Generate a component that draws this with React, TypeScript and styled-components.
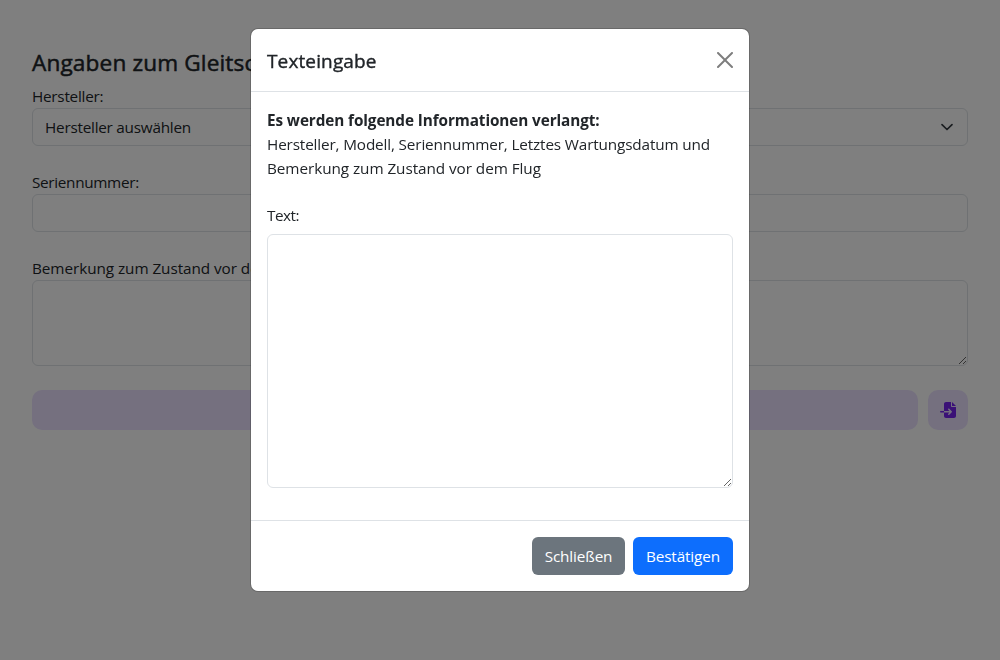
import React from "react";
import styled, { createGlobalStyle } from "styled-components";
import { FaFileImport } from "react-icons/fa6";

const GlobalStyle = createGlobalStyle`
  *, *::before, *::after { box-sizing: border-box; }
  body {
    margin: 0;
    overflow: hidden;
    background: #fff;
    color: #212529;
    font: 400 15.3px/24px "Segoe UI", "Open Sans", "Noto Sans", sans-serif;
  }
`;

const Page = styled.main`
  height: 660px;
  padding: 48px 32px 0;
`;

const PageTitle = styled.h4`
  margin: 0 0 7px;
  font-size: 22.6px;
  line-height: 29px;
  font-weight: 500;
  letter-spacing: 0.15px;
  -webkit-text-stroke: 0.5px currentColor;
  white-space: nowrap;
`;

const Field = styled.div`
  display: flex;
  flex-direction: column;
  margin-bottom: 24px;
`;

const Label = styled.label<{ $spacing?: number }>`
  height: 24px;
  letter-spacing: ${(p) => p.$spacing ?? 0}px;
`;

const Control = styled.div<{ $spacing?: number }>`
  display: flex;
  align-items: center;
  justify-content: space-between;
  height: 38px;
  padding: 0 12px;
  border: 1px solid #dee2e6;
  border-radius: 6px;
  letter-spacing: ${(p) => p.$spacing ?? 0}px;
`;

const TextArea = styled.textarea<{ $height: number }>`
  display: block;
  width: 100%;
  height: ${(p) => p.$height}px;
  margin: 0;
  padding: 6px 12px;
  border: 1px solid #dee2e6;
  border-radius: 6px;
  background: #fff;
  font: inherit;
  resize: vertical;
  outline: none;
`;

const Actions = styled.div`
  display: flex;
  gap: 10px;
`;

const SoftButton = styled.button<{ $wide?: boolean }>`
  display: flex;
  align-items: center;
  justify-content: center;
  flex: ${(p) => (p.$wide ? "1" : "0 0 40px")};
  height: 40px;
  padding: 0;
  border: 0;
  border-radius: 10px;
  background: #eae1fe;
  color: #7622ee;
  font-size: 16px;
`;

const Backdrop = styled.div`
  position: fixed;
  inset: 0;
  display: flex;
  align-items: flex-start;
  justify-content: center;
  padding-top: 28px;
  background: rgba(0, 0, 0, 0.5);
`;

const Dialog = styled.section`
  width: 500px;
  border: 1px solid rgba(0, 0, 0, 0.175);
  border-radius: 8px;
  background: #fff;
  background-clip: padding-box;
`;

const DialogHeader = styled.header`
  display: flex;
  align-items: center;
  justify-content: space-between;
  height: 63px;
  padding: 0 16px;
  border-bottom: 1px solid #dee2e6;
`;

const DialogTitle = styled.h5`
  margin: 0;
  padding-top: 1px;
  font-size: 19px;
  line-height: 30px;
  font-weight: 500;
  letter-spacing: 0.13px;
  -webkit-text-stroke: 0.4px currentColor;
`;

const CloseButton = styled.button`
  display: flex;
  padding: 0;
  border: 0;
  background: none;
  color: #000;
  opacity: 0.5;
`;

const DialogBody = styled.div`
  height: 428px;
  padding: 16px;
`;

const Info = styled.p`
  margin: 0 0 23px;
  white-space: nowrap;
`;

const Line = styled.span<{ $spacing: number; $strong?: boolean }>`
  display: block;
  letter-spacing: ${(p) => p.$spacing}px;
  font-weight: ${(p) => (p.$strong ? 700 : 400)};
`;

const DialogField = styled.div`
  display: flex;
  flex-direction: column;
  gap: 7px;
`;

const DialogFooter = styled.footer`
  display: flex;
  justify-content: flex-end;
  gap: 8px;
  padding: 16px;
  height: 71px;
  border-top: 1px solid #dee2e6;
`;

const Button = styled.button<{ $color: string; $width: number }>`
  width: ${(p) => p.$width}px;
  height: 38px;
  padding: 0;
  border: 0;
  border-radius: 6px;
  background: ${(p) => p.$color};
  color: #fff;
  font: inherit;
  letter-spacing: -0.13px;
`;

export default function App() {
  return (
    <>
      <GlobalStyle />
      <Page>
        <PageTitle>Angaben zum Gleitschirm</PageTitle>
        <Field>
          <Label $spacing={-0.25}>Hersteller:</Label>
          <Control $spacing={-0.24}>
            Hersteller auswählen
            <svg width="16" height="12" viewBox="0 0 16 12" fill="none" stroke="#343a40" strokeWidth="1.7" strokeLinecap="round" strokeLinejoin="round">
              <path d="m3 3.7 5 4.8 5-4.8" />
            </svg>
          </Control>
        </Field>
        <Field>
          <Label $spacing={-0.32}>Seriennummer:</Label>
          <Control />
        </Field>
        <Field>
          <Label $spacing={-0.06}>Bemerkung zum Zustand vor dem Flug:</Label>
          <TextArea $height={86} />
        </Field>
        <Actions>
          <SoftButton $wide />
          <SoftButton aria-label="Importieren">
            <FaFileImport />
          </SoftButton>
        </Actions>
      </Page>
      <Backdrop>
        <Dialog role="dialog">
          <DialogHeader>
            <DialogTitle>Texteingabe</DialogTitle>
            <CloseButton aria-label="Schließen">
              <svg width="16" height="16" viewBox="0 0 16 16" fill="currentColor">
                <path d="M.293.293a1 1 0 0 1 1.414 0L8 6.586 14.293.293a1 1 0 1 1 1.414 1.414L9.414 8l6.293 6.293a1 1 0 0 1-1.414 1.414L8 9.414l-6.293 6.293a1 1 0 0 1-1.414-1.414L6.586 8 .293 1.707a1 1 0 0 1 0-1.414z" />
              </svg>
            </CloseButton>
          </DialogHeader>
          <DialogBody>
            <Info>
              <Line $spacing={-0.09} $strong>Es werden folgende Informationen verlangt:</Line>
              <Line $spacing={-0.145}>Hersteller, Modell, Seriennummer, Letztes Wartungsdatum und</Line>
              <Line $spacing={-0.06}>Bemerkung zum Zustand vor dem Flug</Line>
            </Info>
            <DialogField>
              <Label $spacing={-0.5}>Text:</Label>
              <TextArea $height={254} />
            </DialogField>
          </DialogBody>
          <DialogFooter>
            <Button $color="#6c757d" $width={93}>Schließen</Button>
            <Button $color="#0d6efd" $width={100}>Bestätigen</Button>
          </DialogFooter>
        </Dialog>
      </Backdrop>
    </>
  );
}
